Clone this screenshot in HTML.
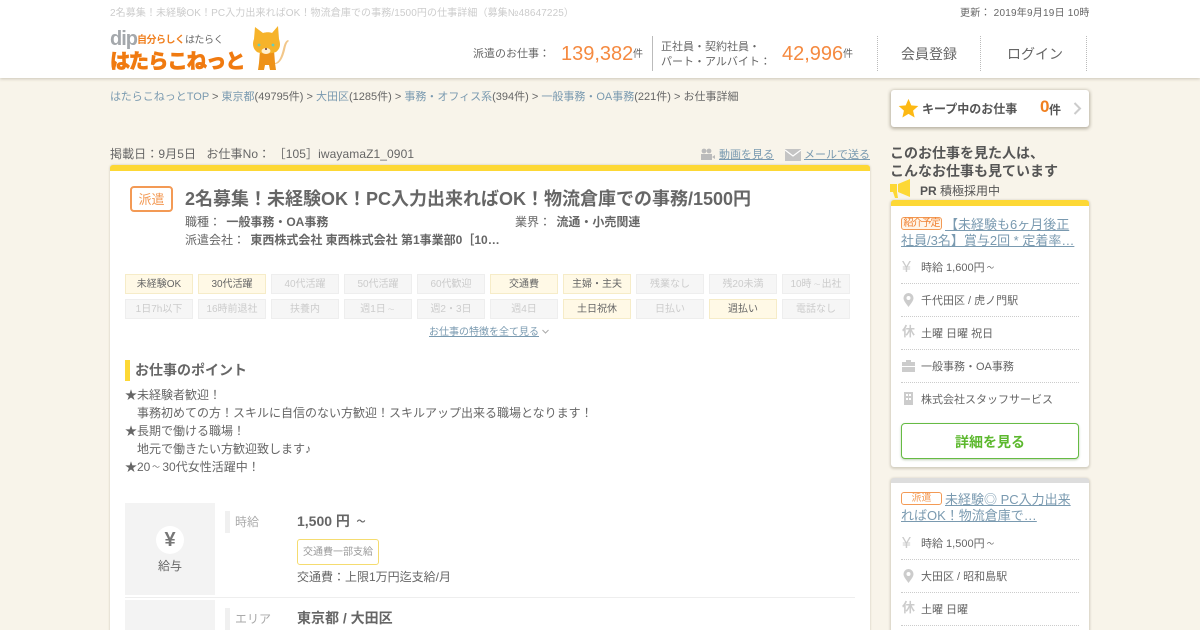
<!DOCTYPE html>
<html lang="ja"><head><meta charset="utf-8"><title>はたらこねっと</title>
<style>
html,body{margin:0;padding:0;width:1200px;height:630px;overflow:hidden}
body{background:#f8f4ea;font-family:"Liberation Sans","Noto Sans CJK JP",sans-serif;color:#666;font-size:12px}
#w{position:relative;width:1200px;height:630px;overflow:hidden}
.a{position:absolute;white-space:nowrap;line-height:1.2}
a,.l{color:#7a9ab0}
.u{text-decoration:underline}
.t{display:inline-block;transform:scale(.65);line-height:1}
.chip{position:absolute;width:66px;height:18px;line-height:20px;overflow:hidden;border:1px solid #eee;background:#f6f6f6;color:#ccc;font-size:10px;text-align:center}
.chip.on{background:#fff9e6;border-color:#f6ecc8;color:#666}
.card{position:absolute;left:891px;width:198px;background:#fff;border-radius:3px;box-shadow:0 1px 2px 1px rgba(120,110,90,.28)}
.ic{position:absolute;color:#ccc;font-weight:bold;font-size:14px;line-height:1}
</style></head><body><div id="w">
<div class="a" style="left:0;top:0;width:1200px;height:78px;background:#fff;box-shadow:0 1px 3px rgba(100,90,70,.3)"></div>
<div class="a" style="left:110px;top:8px;font-size:10px;color:#ccc;letter-spacing:.1px">2名募集！未経験OK！PC入力出来ればOK！物流倉庫での事務/1500円の仕事詳細（募集№48647225）</div>
<div class="a" style="left:960px;top:8px;font-size:10px;color:#666;letter-spacing:.22px">更新： 2019年9月19日 10時</div>

<div class="a" style="left:110px;top:28px;font-size:20px;font-weight:bold;color:#a4a8ac;letter-spacing:-1px;line-height:22px">dip</div>
<div class="a" style="left:137px;top:35px;font-size:10px;font-weight:bold;color:#f08020;letter-spacing:-.5px">自分らしく</div>
<div class="a" style="left:185px;top:35px;font-size:10px;color:#666;letter-spacing:-.4px">はたらく</div>
<div class="a" style="left:110px;top:50px;font-size:20px;font-weight:bold;color:#f07a10;letter-spacing:-.7px;line-height:25px;-webkit-text-stroke:1px #f07a10">はたらこねっと</div>
<svg class="a" style="left:250px;top:24px" width="42" height="50" viewBox="0 0 42 50">
<path d="M25 40c5 0 8-6 10-14 1-5 2-8 4-9l-1-1c-3 1-4 5-5 9-2 8-4 13-8 14z" fill="#f2c78a"/>
<path d="M10 26l-1 13-1 7h6l1-5h4l1 5h6l-1-7-1-13z" fill="#ee9218"/>
<path d="M5 3l8 6c3-1 7-1 9 0l6-7 1 13c2 6 1 10-3 13-5 2-15 2-19 0-4-3-5-8-3-13z" fill="#f6b32a"/>
<circle cx="9" cy="21" r="1.400" fill="#6cb"/><circle cx="23" cy="21" r="1.400" fill="#6cb"/>
<ellipse cx="16" cy="27" rx="4.500" ry="3" fill="#fff0d0"/><circle cx="16" cy="25" r="1" fill="#633"/>
</svg>

<div class="a" style="left:473px;top:48px;font-size:11px">派遣のお仕事：</div>
<div class="a" style="left:561px;top:42px;font-size:20px;color:#f58a40;line-height:25px">139,382</div>
<div class="a" style="left:633px;top:49px;font-size:10px">件</div>
<div class="a" style="left:652px;top:36px;width:1px;height:35px;background:#bbb"></div>
<div class="a" style="left:661px;top:40px;font-size:11px;line-height:15px">正社員・契約社員・<br>パート・アルバイト：</div>
<div class="a" style="left:782px;top:42px;font-size:20px;color:#f58a40;line-height:25px">42,996</div>
<div class="a" style="left:843px;top:49px;font-size:10px">件</div>
<div class="a" style="left:877px;top:36px;height:35px;border-left:1px dotted #bbb"></div>
<div class="a" style="left:980px;top:36px;height:35px;border-left:1px dotted #bbb"></div>
<div class="a" style="left:1086px;top:36px;height:35px;border-left:1px dotted #bbb"></div>
<div class="a" style="left:901px;top:46px;font-size:14px">会員登録</div>
<div class="a" style="left:1007px;top:46px;font-size:14px">ログイン</div>

<div class="a" style="left:110px;top:91px;font-size:11px"><span class="l">はたらこねっとTOP</span> &gt; <span class="l">東京都</span>(49795件) &gt; <span class="l">大田区</span>(1285件) &gt; <span class="l">事務・オフィス系</span>(394件) &gt; <span class="l">一般事務・OA事務</span>(221件) &gt; お仕事詳細</div>

<div class="a" style="left:110px;top:147px;font-size:12px;letter-spacing:.09px">掲載日：9月5日 &nbsp;&nbsp;お仕事No： ［105］iwayamaZ1_0901</div>
<svg class="a" style="left:701px;top:148px" width="15" height="13" viewBox="0 0 15 13" fill="#bbb"><circle cx="3" cy="3" r="2.400"/><circle cx="8" cy="3" r="2.400"/><rect x="0" y="6" width="11" height="6"/><path d="M11 9l3-2v4z"/></svg>
<div class="a l u" style="left:719px;top:149px;font-size:11px">動画を見る</div>
<svg class="a" style="left:785px;top:149px" width="16" height="12" viewBox="0 0 16 12"><rect width="16" height="12" fill="#c4c4c4"/><path d="M0 1l8 6 8-6" fill="none" stroke="#fff" stroke-width="1.200"/></svg>
<div class="a l u" style="left:804px;top:149px;font-size:11px">メールで送る</div>

<div class="a" style="left:110px;top:165px;width:760px;height:480px;background:#fff;border-top:6px solid #fdd835;border-radius:3px 3px 0 0;box-shadow:0 0 2px rgba(120,110,90,.35);box-sizing:border-box"></div>
<div class="a" style="left:130px;top:186px;width:39px;height:22px;border:2px solid #f39a55;border-radius:4px;text-align:center;font-size:13px;line-height:24px;color:#f39a55">派遣</div>
<div class="a" style="left:185px;top:187px;font-size:18px;font-weight:bold;color:#666;line-height:24px">2名募集！未経験OK！PC入力出来ればOK！物流倉庫での事務/1500円</div>
<div class="a" style="left:185px;top:215px">職種： <b style="margin-left:2px">一般事務・OA事務</b></div>
<div class="a" style="left:515px;top:215px">業界： <b style="margin-left:2px">流通・小売関連</b></div>
<div class="a" style="left:185px;top:233px">派遣会社： <b style="margin-left:2px">東西株式会社 東西株式会社 第1事業部0［10…</b></div>

<div class="chip on" style="left:125px;top:274px">未経験OK</div><div class="chip on" style="left:198px;top:274px">30代活躍</div><div class="chip" style="left:271px;top:274px">40代活躍</div><div class="chip" style="left:344px;top:274px">50代活躍</div><div class="chip" style="left:417px;top:274px">60代歓迎</div><div class="chip on" style="left:490px;top:274px">交通費</div><div class="chip on" style="left:563px;top:274px">主婦・主夫</div><div class="chip" style="left:636px;top:274px">残業なし</div><div class="chip" style="left:709px;top:274px">残20未満</div><div class="chip" style="left:782px;top:274px">10時<span class="t">～</span>出社</div>
<div class="chip" style="left:125px;top:299px">1日7h以下</div><div class="chip" style="left:198px;top:299px">16時前退社</div><div class="chip" style="left:271px;top:299px">扶養内</div><div class="chip" style="left:344px;top:299px">週1日<span class="t">～</span></div><div class="chip" style="left:417px;top:299px">週2・3日</div><div class="chip" style="left:490px;top:299px">週4日</div><div class="chip on" style="left:563px;top:299px">土日祝休</div><div class="chip" style="left:636px;top:299px">日払い</div><div class="chip on" style="left:709px;top:299px">週払い</div><div class="chip" style="left:782px;top:299px">電話なし</div>
<div class="a l u" style="left:429px;top:327px;font-size:10px">お仕事の特徴を全て見る</div>
<svg class="a" style="left:542px;top:329px" width="7" height="5" viewBox="0 0 7 5"><path d="M.5 1l3 3 3-3" fill="none" stroke="#aaa"/></svg>

<div class="a" style="left:125px;top:360px;width:5px;height:21px;background:#fdd835"></div>
<div class="a" style="left:135px;top:362px;font-size:14px;font-weight:bold">お仕事のポイント</div>
<div class="a" style="left:125px;top:386px;font-size:12px;line-height:18px">★未経験者歓迎！<br>　事務初めての方！スキルに自信のない方歓迎！スキルアップ出来る職場となります！<br>★長期で働ける職場！<br>　地元で働きたい方歓迎致します♪<br>★20<span class="t">～</span>30代女性活躍中！</div>

<div class="a" style="left:125px;top:503px;width:90px;height:92px;background:#f3f3f3"></div>
<div class="a" style="left:156px;top:526px;width:28px;height:28px;border-radius:50%;background:#fff;text-align:center;font-size:20px;font-weight:bold;line-height:28px;color:#777">¥</div>
<div class="a" style="left:158px;top:559px;font-size:12px">給与</div>
<div class="a" style="left:225px;top:511px;width:5px;height:22px;background:#f0f0f0"></div>
<div class="a" style="left:235px;top:515px;color:#aaa">時給</div>
<div class="a" style="left:297px;top:513px;font-size:14px;font-weight:bold">1,500 円 <span class="t">～</span></div>
<div class="a" style="left:297px;top:539px;width:80px;height:24px;border:1px solid #f5dc70;border-radius:3px;text-align:center;font-size:10px;line-height:26px;color:#999">交通費一部支給</div>
<div class="a" style="left:297px;top:570px;font-size:12px">交通費：上限1万円迄支給/月</div>
<div class="a" style="left:125px;top:597px;width:730px;height:1px;background:#eee"></div>
<div class="a" style="left:125px;top:600px;width:90px;height:40px;background:#f3f3f3"></div>
<div class="a" style="left:225px;top:608px;width:5px;height:22px;background:#f0f0f0"></div>
<div class="a" style="left:235px;top:612px;color:#aaa">エリア</div>
<div class="a" style="left:297px;top:610px;font-size:14px;font-weight:bold">東京都 / 大田区</div>

<div class="card" style="top:90px;height:37px;box-shadow:0 1px 3px 1px rgba(90,80,60,.4)"></div>
<svg class="a" style="left:898px;top:98px" width="21" height="21" viewBox="0 0 24 24"><path d="M12 1l3.200 7.400 8 .7-6 5.300 1.800 7.900L12 18.100 5 22.300l1.800-7.900-6-5.300 8-.7z" fill="#fdb913"/></svg>
<div class="a" style="left:922px;top:102px;font-size:12px;font-weight:bold;color:#555">キープ中のお仕事</div>
<div class="a" style="left:1040px;top:97px;font-size:17px;font-weight:bold;color:#f08020;line-height:20px">0</div>
<div class="a" style="left:1049px;top:103px;font-size:12px;font-weight:bold;color:#555">件</div>
<svg class="a" style="left:1073px;top:102px" width="9" height="13" viewBox="0 0 9 13"><path d="M1.500 1l5.500 5.500-5.500 5.500" fill="none" stroke="#ccc" stroke-width="2"/></svg>
<div class="a" style="left:890px;top:144px;font-size:14px;font-weight:bold;line-height:18px;color:#555">このお仕事を見た人は、<br>こんなお仕事も見ています</div>
<svg class="a" style="left:890px;top:179px" width="24" height="22" viewBox="0 0 24 22" fill="#fdd835"><path d="M0 5h7v8H0zM8 5l12-5v18L8 13zM3 13h4l1 6H5z"/></svg>
<div class="a" style="left:920px;top:184px;font-size:12px;color:#555"><b>PR</b> 積極採用中</div>

<div class="card" style="top:200px;height:267px;border-top:6px solid #fdd835;box-sizing:border-box"></div>
<div class="a" style="left:901px;top:217px;width:39px;height:11px;border:1px solid #f39a55;border-radius:3px;font-size:10px;line-height:12px;color:#f08030;text-align:center;background:#fff5e8;letter-spacing:-1px">紹介予定</div>
<div class="a l u" style="left:945px;top:217px;font-size:13px;line-height:16px">【未経験も6ヶ月後正</div>
<div class="a l u" style="left:901px;top:233px;font-size:13px;line-height:16px">社員/3名】賞与2回 * 定着率…</div>
<div class="a" style="left:902px;top:258px;font-size:16px;color:#ccc">¥</div><div class="a" style="left:921px;top:262px;font-size:11px">時給 1,600円<span class="t">～</span></div>
<div class="a" style="left:901px;top:283px;width:178px;border-top:1px dotted #ccc"></div>
<svg class="a" style="left:903px;top:293px" width="11" height="14" viewBox="0 0 11 14"><path d="M5.500 0a5 5 0 0 1 5 5c0 3-3 6-5 9-2-3-5-6-5-9a5 5 0 0 1 5-5z" fill="#ccc"/><circle cx="5.500" cy="5" r="2" fill="#fff"/></svg>
<div class="a" style="left:921px;top:295px;font-size:11px">千代田区 / 虎ノ門駅</div>
<div class="a" style="left:901px;top:316px;width:178px;border-top:1px dotted #ccc"></div>
<div class="ic" style="left:902px;top:325px;font-size:13px">休</div><div class="a" style="left:921px;top:328px;font-size:11px">土曜 日曜 祝日</div>
<div class="a" style="left:901px;top:349px;width:178px;border-top:1px dotted #ccc"></div>
<svg class="a" style="left:902px;top:360px" width="13" height="12" viewBox="0 0 13 12"><path d="M0 2h4V0h5v2h4v4H0zM0 7h13v5H0z" fill="#ccc"/></svg>
<div class="a" style="left:921px;top:361px;font-size:11px">一般事務・OA事務</div>
<div class="a" style="left:901px;top:382px;width:178px;border-top:1px dotted #ccc"></div>
<svg class="a" style="left:904px;top:392px" width="9" height="13" viewBox="0 0 9 13"><rect width="9" height="13" fill="#ccc"/><path d="M2 2h2v2H2zM5 2h2v2H5zM2 6h2v2H2zM5 6h2v2H5z" fill="#fff"/></svg>
<div class="a" style="left:921px;top:394px;font-size:11px">株式会社スタッフサービス</div>
<div class="a" style="left:901px;top:423px;width:176px;height:34px;border:1px solid #66bb44;border-radius:4px;background:#fff;text-align:center;font-size:14px;font-weight:bold;color:#5cb82e;line-height:36px;box-shadow:0 1px 2px rgba(90,130,70,.4)">詳細を見る</div>

<div class="card" style="top:478px;height:170px;border-top:5px solid #ddd;box-sizing:border-box"></div>
<div class="a" style="left:901px;top:492px;width:39px;height:11px;border:1px solid #f39a55;border-radius:3px;font-size:10px;line-height:12px;color:#f39a55;text-align:center">派遣</div>
<div class="a l u" style="left:945px;top:492px;font-size:13px;line-height:16px">未経験◎ PC入力出来</div>
<div class="a l u" style="left:901px;top:508px;font-size:13px;line-height:16px">ればOK！物流倉庫で…</div>
<div class="a" style="left:902px;top:534px;font-size:16px;color:#ccc">¥</div><div class="a" style="left:921px;top:538px;font-size:11px">時給 1,500円<span class="t">～</span></div>
<div class="a" style="left:901px;top:559px;width:178px;border-top:1px dotted #ccc"></div>
<svg class="a" style="left:903px;top:569px" width="11" height="14" viewBox="0 0 11 14"><path d="M5.500 0a5 5 0 0 1 5 5c0 3-3 6-5 9-2-3-5-6-5-9a5 5 0 0 1 5-5z" fill="#ccc"/><circle cx="5.500" cy="5" r="2" fill="#fff"/></svg>
<div class="a" style="left:921px;top:571px;font-size:11px">大田区 / 昭和島駅</div>
<div class="a" style="left:901px;top:592px;width:178px;border-top:1px dotted #ccc"></div>
<div class="ic" style="left:902px;top:601px;font-size:13px">休</div><div class="a" style="left:921px;top:604px;font-size:11px">土曜 日曜</div>
<div class="a" style="left:901px;top:625px;width:178px;border-top:1px dotted #ccc"></div>
</div></body></html>
